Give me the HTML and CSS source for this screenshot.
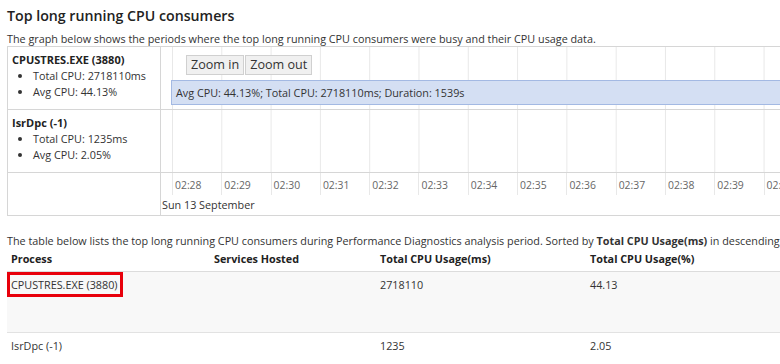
FILE: index.html
```html
<!DOCTYPE html>
<html lang="en">
<head>
    <meta charset="UTF-8">
    <meta name="viewport" content="width=device-width, initial-scale=1.0">
    <title>Top long running CPU consumers</title>
    <link rel="stylesheet" href="styles.css">
</head>
<body>
    <h2 class="title">Top long running CPU consumers</h2>
    <p class="intro">The graph below shows the periods where the top long running CPU consumers were busy and their CPU usage data.</p>

    <div class="chart">
        <div class="chart-row">
            <div class="proc">
                <div class="proc-name">CPUSTRES.EXE (3880)</div>
                <ul class="proc-stats">
                    <li>Total CPU: 2718110ms</li>
                    <li>Avg CPU: 44.13%</li>
                </ul>
            </div>
            <div class="track">
                <div class="zoom">
                    <button>Zoom in</button><button>Zoom out</button>
                </div>
                <div class="bar">Avg CPU: 44.13%; Total CPU: 2718110ms; Duration: 1539s</div>
            </div>
        </div>

        <div class="chart-row">
            <div class="proc">
                <div class="proc-name">IsrDpc (-1)</div>
                <ul class="proc-stats">
                    <li>Total CPU: 1235ms</li>
                    <li>Avg CPU: 2.05%</li>
                </ul>
            </div>
            <div class="track"></div>
        </div>

        <div class="chart-row axis-row">
            <div class="proc"></div>
            <div class="axis">
                <div class="ticks">
                    <span>02:28</span><span>02:29</span><span>02:30</span><span>02:31</span>
                    <span>02:32</span><span>02:33</span><span>02:34</span><span>02:35</span>
                    <span>02:36</span><span>02:37</span><span>02:38</span><span>02:39</span>
                    <span>02:40</span>
                </div>
                <div class="axis-date">Sun 13 September</div>
            </div>
        </div>
    </div>

    <p class="intro table-intro">The table below lists the top long running CPU consumers during Performance Diagnostics analysis period. Sorted by <b>Total CPU Usage(ms)</b> in descending order.</p>

    <table class="consumers">
        <thead>
            <tr>
                <th class="col-proc">Process</th>
                <th class="col-svc">Services Hosted</th>
                <th class="col-ms">Total CPU Usage(ms)</th>
                <th class="col-pct">Total CPU Usage(%)</th>
            </tr>
        </thead>
        <tbody>
            <tr class="tall">
                <td><span class="highlight">CPUSTRES.EXE (3880)</span></td>
                <td></td>
                <td>2718110</td>
                <td>44.13</td>
            </tr>
            <tr>
                <td>IsrDpc (-1)</td>
                <td></td>
                <td>1235</td>
                <td>2.05</td>
            </tr>
        </tbody>
    </table>
</body>
</html>
```

FILE: styles.css
```css
* {
    box-sizing: border-box;
}

html {
    overflow: hidden;
}

body {
    margin: 0;
    padding: 0 7px;
    width: 1000px;
    background: #fff;
    color: #333;
    font-family: "Open Sans", "Noto Sans", sans-serif;
    font-size: 10.8px;
    line-height: 16px;
}

.title {
    margin: 0;
    padding-top: 6px;
    height: 26px;
    font-size: 14.2px;
    line-height: 20px;
    font-weight: 600;
    color: #222;
}

.intro {
    margin: 5px 0 0;
    line-height: 15px;
    white-space: nowrap;
}

.chart {
    border: 1px solid #d6d6d6;
    border-right: none;
}

.chart-row {
    display: flex;
    height: 63px;
    border-bottom: 1px solid #d6d6d6;
}

.chart-row.axis-row {
    height: 42px;
    border-bottom: none;
}

.proc {
    flex: 0 0 153px;
    border-right: 1px solid #d6d6d6;
    padding: 5px 4px 0 4px;
    white-space: nowrap;
}

.proc-name {
    font-weight: 700;
    font-size: 11px;
    color: #222;
}

.proc-stats {
    margin: 0;
    padding-left: 21px;
}

.track {
    flex: 1;
    overflow: hidden;
    padding-top: 8px;
    background-image: linear-gradient(to right, #e8e8e8 1px, transparent 1px);
    background-size: 49.3px 100%;
    background-position: 11px 0;
}

.zoom {
    display: flex;
    gap: 1px;
    margin-left: 25px;
}

.zoom button {
    font-family: inherit;
    font-size: 12.6px;
    line-height: 18px;
    height: 20px;
    padding: 0 4px;
    color: #333;
    background: #f0f0f0;
    border: 1px solid #d0d0d0;
    border-radius: 0;
}

.bar {
    margin: 5px 0 0 10px;
    width: 1400px;
    height: 25px;
    padding-left: 4px;
    line-height: 23px;
    background: #d4dff3;
    border: 1px solid #a3b9e3;
    white-space: nowrap;
}

.axis {
    flex: 1;
    overflow: hidden;
}

.ticks {
    display: flex;
    margin-left: 11px;
    height: 22px;
}

.ticks span {
    flex: 0 0 49.3px;
    border-left: 1px solid #e8e8e8;
    padding-left: 2px;
    font-size: 10.4px;
    line-height: 24px;
    color: #666;
}

.axis-date {
    padding-left: 1px;
    line-height: 20px;
}

.table-intro {
    margin-top: 17px;
    line-height: 16px;
}

.consumers {
    border-collapse: collapse;
    margin-top: 1px;
    table-layout: fixed;
    width: 980px;
}

.consumers th {
    text-align: left;
    font-weight: 700;
    color: #222;
    padding: 1px 4px 4px;
    border-bottom: 1px solid #dcdcdc;
}

.consumers td {
    vertical-align: top;
    padding: 0 4px;
    height: 33px;
    line-height: 25px;
}

.consumers tr.tall td {
    height: 61px;
    background: #f8f8f8;
    border-bottom: 1px solid #e2e2e2;
}

.col-proc { width: 203px; }
.col-svc { width: 166px; }
.col-ms { width: 210px; }

.highlight {
    display: inline-block;
    margin-left: -4px;
    padding: 0 2px 0 1px;
    line-height: 19px;
    border: 3px solid #e8000b;
}
```
